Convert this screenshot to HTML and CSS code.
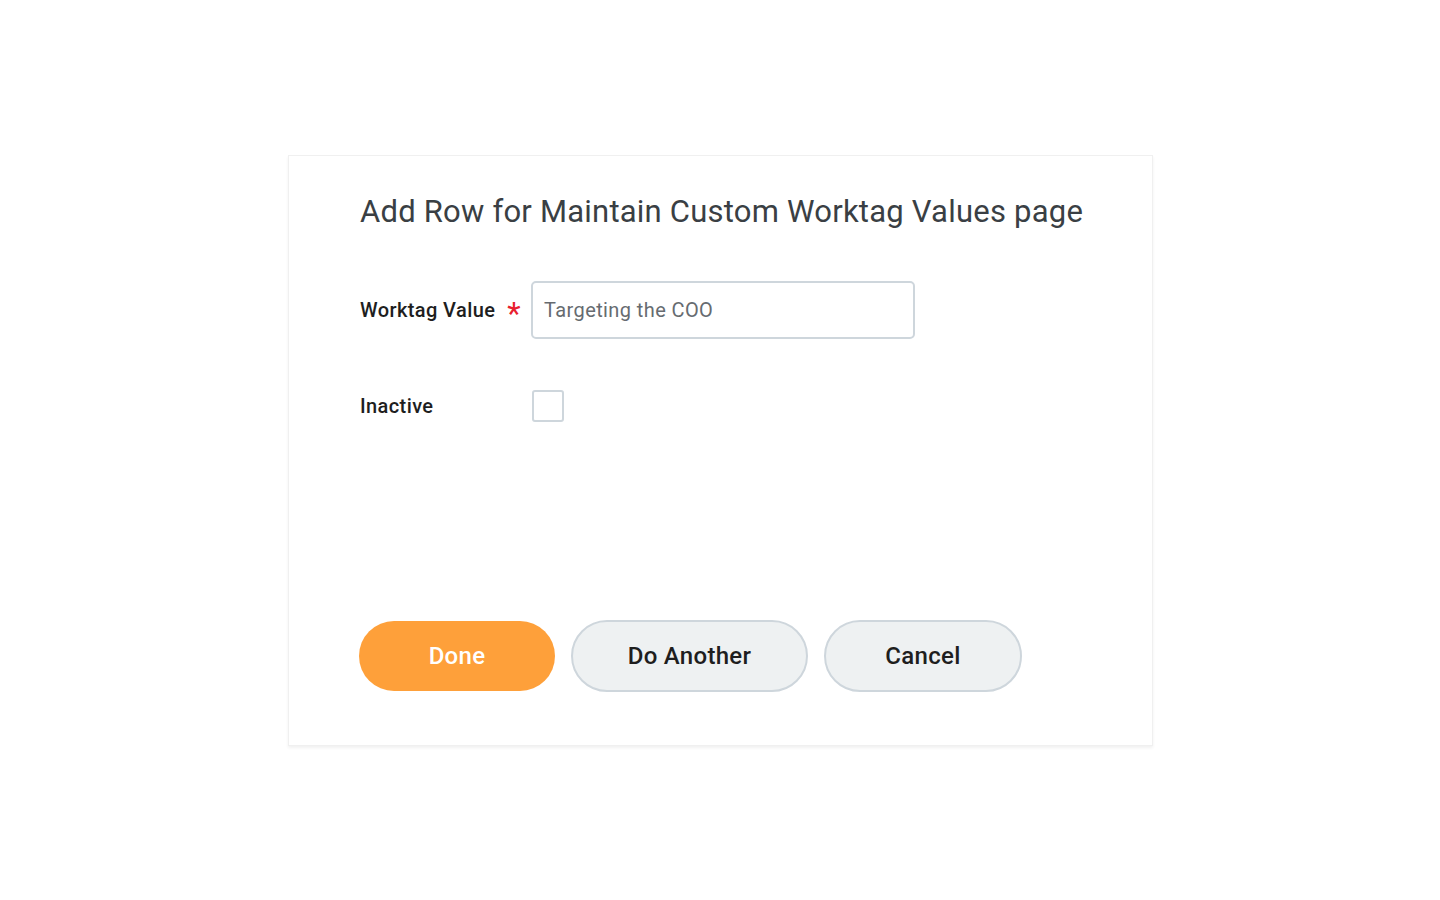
FILE: index.html
```html
<!DOCTYPE html>
<html lang="en">
<head>
<meta charset="utf-8">
<title>Add Row</title>
<link rel="stylesheet" href="styles.css">
</head>
<body>
<div class="page">
  <div class="card">
    <h1 class="title">Add Row for Maintain Custom Worktag Values page</h1>
    <div class="form">
      <div class="row row-input">
        <label class="label" for="wv">Worktag Value</label>
        <span class="req">*</span>
        <div class="input" id="wv">Targeting the COO</div>
      </div>
      <div class="row row-check">
        <span class="label">Inactive</span>
        <span class="checkbox"></span>
      </div>
    </div>
    <div class="actions">
      <button class="btn btn-primary">Done</button>
      <button class="btn btn-secondary btn-another">Do Another</button>
      <button class="btn btn-secondary btn-cancel">Cancel</button>
    </div>
  </div>
</div>
</body>
</html>
```

FILE: styles.css
```css
html, body {
  margin: 0;
  padding: 0;
  background: #ffffff;
  font-family: Roboto, "Liberation Sans", sans-serif;
}
.page {
  height: 900px;
  display: flex;
  align-items: center;
  justify-content: center;
}
.card {
  box-sizing: border-box;
  width: 865px;
  height: 591px;
  margin-left: 1px;
  background: #fff;
  border: 1px solid #f0f0f0;
  box-shadow: 0 2px 3px rgba(0,0,0,0.06);
  padding: 36px 40px 0 71px;
  display: flex;
  flex-direction: column;
}
.title {
  margin: 0;
  font-size: 31px;
  font-weight: 400;
  line-height: 40px;
  letter-spacing: 0.22px;
  white-space: nowrap;
  color: #3a3f44;
}
.form {
  margin-top: 49px;
  display: flex;
  flex-direction: column;
}
.row {
  display: flex;
  align-items: center;
}
.label {
  font-size: 20px;
  font-weight: 500;
  letter-spacing: 0.4px;
  color: #1e1e1e;
  width: 137px;
}
.req {
  color: #e8202e;
  font-size: 31px;
  font-weight: 400;
  width: 34px;
  text-align: center;
  line-height: 20px;
  padding-top: 9px;
}
.input {
  box-sizing: border-box;
  width: 384px;
  height: 58px;
  border: 2px solid #ced6dc;
  border-radius: 5px;
  padding: 0 11px;
  display: flex;
  align-items: center;
  font-size: 20px;
  letter-spacing: 0.4px;
  color: #666b70;
}
.row-check {
  margin-top: 51px;
}
.row-check .label {
  width: 172px;
}
.checkbox {
  box-sizing: border-box;
  width: 32px;
  height: 32px;
  border: 2px solid #ced6dc;
  border-radius: 3px;
}
.actions {
  margin-top: auto;
  margin-bottom: 53px;
  margin-left: -1px;
  display: flex;
  align-items: center;
  gap: 16px;
}
.btn {
  box-sizing: border-box;
  font-family: Roboto, "Liberation Sans", sans-serif;
  font-size: 24px;
  font-weight: 500;
  letter-spacing: 0.3px;
  border-radius: 36px;
  cursor: pointer;
}
.btn-primary {
  width: 196px;
  height: 70px;
  background: #fea03a;
  border: none;
  color: #fff;
}
.btn-secondary {
  height: 72px;
  background: #eef1f2;
  border: 2px solid #ced6dc;
  color: #1e1e1e;
}
.btn-another {
  width: 237px;
}
.btn-cancel {
  width: 198px;
}
```
